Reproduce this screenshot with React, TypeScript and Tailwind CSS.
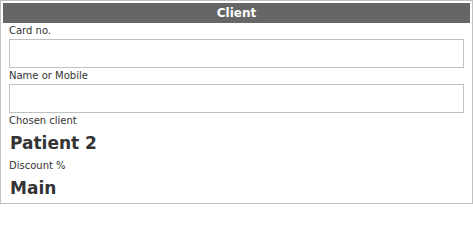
export default function App() {
  return (
    <div className="w-[473px] h-[206px] bg-white font-['DejaVu_Sans',sans-serif] text-[#333]">
      <div className="h-[204px] border border-[#c0c0c0] p-[2px] flex flex-col">
        <div className="h-[20px] bg-[#666666] text-white text-[12px] font-bold leading-[20px] text-center">
          Client
        </div>
        <div className="px-[6px] flex flex-col">
          <label className="text-[10px] leading-[16px]">Card no.</label>
          <input className="h-[29px] border border-[#c0c0c0] outline-none" />
          <label className="text-[10px] leading-[16px]">Name or Mobile</label>
          <input className="h-[29px] border border-[#c0c0c0] outline-none" />
          <label className="text-[10px] leading-[16px]">Chosen client</label>
          <div className="text-[17px] font-bold leading-[29px] pl-px">Patient 2</div>
          <label className="text-[10px] leading-[16px]">Discount %</label>
          <div className="text-[17px] font-bold leading-[29px] pl-px">Main</div>
        </div>
      </div>
    </div>
  );
}
